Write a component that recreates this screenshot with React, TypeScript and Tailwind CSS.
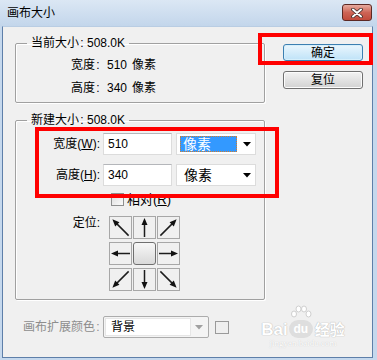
import React from "react";

const F = "font-['Liberation_Sans','Noto_Sans_CJK_SC',sans-serif]";

const ANG: Record<string, number> = { n: -90, s: 90, e: 0, w: 180, ne: -45, nw: -135, se: 45, sw: 135 };

function Arrow({ dir }: { dir: string }) {
  const diag = dir.length === 2;
  const L = diag ? 11.5 : 9.5;
  return (
    <svg width="21" height="21" viewBox="-10.5 -10.5 21 21">
      <g transform={`rotate(${ANG[dir]})`}>
        <line x1={-L} y1={0} x2={L - 5} y2={0} stroke="#1c1c1c" strokeWidth="1.5" />
        <polygon points={`${L},0 ${L - 7},-3 ${L - 7},3`} fill="#111" />
      </g>
    </svg>
  );
}

function Cell({ dir }: { dir?: string }) {
  if (!dir)
    return (
      <div className="w-[23px] h-[23px] rounded-[3px] border border-[#6f6f6f] bg-linear-to-b from-[#f7f7f7] to-[#d9d9d9]" />
    );
  return (
    <div className="w-[23px] h-[23px] border border-[#a7a7a7] bg-[#f0f0f0] flex items-center justify-center">
      <Arrow dir={dir} />
    </div>
  );
}

function Legend({ title }: { title: string }) {
  return (
    <legend className="ml-[11px] px-[4px] leading-[15px] h-[15px]">
      <span className="flex items-center">
        <span>{title}</span>
        <span className="w-[6px] text-center">:</span>
        <span className="ml-[2px]">508.0K</span>
      </span>
    </legend>
  );
}

function DownTri({ color = "#000" }: { color?: string }) {
  return (
    <svg width="8" height="5" viewBox="0 0 8 5">
      <polygon points="0,0 8,0 4,4.5" fill={color} />
    </svg>
  );
}

export default function App() {
  return (
    <div
      className={`relative w-[377px] h-[360px] bg-[#c5d8ed] flex flex-col overflow-hidden ${F} text-[12px] leading-[14px] text-black`}
    >
      {/* Title bar */}
      <div className="h-[26px] shrink-0 flex items-start justify-between pl-[7px] pr-[5px] bg-linear-to-b from-[#dbe7f4] to-[#c3d6eb]">
        <span className="mt-[6px] text-[12px] leading-[14px] text-black">画布大小</span>
        <div className="mt-[4px] w-[30px] h-[17px] rounded-[3px] border border-[#5c2924] bg-linear-to-b from-[#e6ab9f] via-[#cd6456] to-[#c14a3b] flex items-center justify-center">
          <svg width="14" height="10" viewBox="0 0 14 10">
            <path d="M3 1.5 L11 8.5 M11 1.5 L3 8.5" stroke="#3a2a28" strokeWidth="3.6" strokeLinecap="round" />
            <path d="M3 1.5 L11 8.5 M11 1.5 L3 8.5" stroke="#ffffff" strokeWidth="2" strokeLinecap="round" />
          </svg>
        </div>
      </div>

      {/* Client area */}
      <div className="flex-1 ml-[2px] mr-[4px] mb-[2px] bg-[#f0f0f0] border-l border-r border-b border-t border-[#5e7fa9] border-t-[#b9cde3] flex flex-col">
        <div className="flex">
          {/* Left column */}
          <div className="pl-[12px] pt-[9px] flex flex-col">
            <fieldset className="w-[250px] border border-[#a0a0a0] rounded-[2px] shadow-[1px_1px_0_#ffffff,inset_1px_1px_0_#ffffff]">
              <Legend title="当前大小" />
              <div className="pl-[55px] pt-[6px] pb-[6px] flex flex-col gap-[7px]">
                <div className="flex items-center h-[16px]">
                  <span>宽度</span>
                  <span className="w-[6px] text-center">:</span>
                  <span className="ml-[6px]">510</span>
                  <span className="ml-[5px]">像素</span>
                </div>
                <div className="flex items-center h-[16px]">
                  <span>高度</span>
                  <span className="w-[6px] text-center">:</span>
                  <span className="ml-[6px]">340</span>
                  <span className="ml-[5px]">像素</span>
                </div>
              </div>
            </fieldset>

            <fieldset className="mt-[10px] w-[250px] border border-[#a0a0a0] rounded-[2px] shadow-[1px_1px_0_#ffffff,inset_1px_1px_0_#ffffff]">
              <Legend title="新建大小" />
              <div className="pt-[5px] pb-[8px] flex flex-col">
                {/* width row */}
                <div className="flex items-center h-[22px]">
                  <div className="w-[84px] text-right">
                    宽度(<span className="underline">W</span>):
                  </div>
                  <div className="ml-[3px] w-[69px] h-[22px] bg-white border border-[#dcdcdc] border-t-[#b4b6ba] flex items-center pl-[4px] text-[12px]">
                    510
                  </div>
                  <div className="ml-[4px] w-[80px] h-[22px] bg-white border border-[#dcdcdc] flex items-center pl-[3px] pr-[4px] justify-between">
                    <div className="w-[57px] h-[16px] bg-[#3399ff] border border-dotted border-[#d27d2d] text-white text-[14px] leading-[14px] flex items-center pl-[2px]">
                      像素
                    </div>
                    <DownTri />
                  </div>
                </div>
                {/* height row */}
                <div className="mt-[9px] flex items-center h-[22px]">
                  <div className="w-[84px] text-right">
                    高度(<span className="underline">H</span>):
                  </div>
                  <div className="ml-[3px] w-[69px] h-[22px] bg-white border border-[#dcdcdc] border-t-[#b4b6ba] flex items-center pl-[4px] text-[12px]">
                    340
                  </div>
                  <div className="ml-[4px] w-[80px] h-[22px] bg-white border border-[#dcdcdc] flex items-center pl-[7px] pr-[4px] justify-between">
                    <span className="text-[14px] leading-[14px]">像素</span>
                    <DownTri />
                  </div>
                </div>
                {/* checkbox row */}
                <div className="mt-[7px] flex items-center h-[13px] pl-[95px]">
                  <div className="w-[13px] h-[13px] border border-[#8e8f8f] bg-linear-to-br from-[#dcdcdc] to-[#fbfbfb]" />
                  <span className="ml-[3px] text-[13px]">
                    相对(<span className="underline">R</span>)
                  </span>
                </div>
                {/* anchor row */}
                <div className="mt-[10px] flex items-start">
                  <div className="w-[84px] text-right">定位:</div>
                  <div className="ml-[9px] grid grid-cols-[23px_23px_23px] gap-x-[1px] gap-y-[3px]">
                    <Cell dir="nw" />
                    <Cell dir="n" />
                    <Cell dir="ne" />
                    <Cell dir="w" />
                    <Cell />
                    <Cell dir="e" />
                    <Cell dir="sw" />
                    <Cell dir="s" />
                    <Cell dir="se" />
                  </div>
                </div>
              </div>
            </fieldset>
          </div>

          {/* Right column: buttons */}
          <div className="ml-[18px] pt-[17px] flex flex-col">
            <button className="w-[80px] h-[17px] rounded-[3px] border border-[#3c7fb1] bg-linear-to-b from-[#eaf6fd] to-[#bfe3f8] shadow-[inset_0_0_0_1px_#d6effb] text-[12px] leading-[14px] flex items-center justify-center">
              确定
            </button>
            <button className="mt-[10px] w-[80px] h-[18px] rounded-[3px] border border-[#707070] bg-linear-to-b from-[#f3f3f3] to-[#d2d2d2] shadow-[inset_0_0_0_1px_#fcfcfc] text-[12px] leading-[14px] flex items-center justify-center">
              复位
            </button>
          </div>
        </div>

        {/* bottom row */}
        <div className="mt-[16px] pl-[20px] flex items-center">
          <span className="text-[#8d8d8d] flex items-center">
            画布扩展颜色<span className="w-[6px] text-center">:</span>
          </span>
          <div className="ml-[2px] w-[106px] h-[22px] border border-[#acacac] rounded-[2px] bg-[#f4f4f4] flex items-center p-[1px]">
            <div className="w-[86px] h-[18px] border border-[#e6e6e6] bg-white flex items-center pl-[5px]">背景</div>
            <div className="flex-1 flex items-center justify-center">
              <DownTri color="#a0a0a0" />
            </div>
          </div>
          <div className="ml-[6px] w-[14px] h-[13px] border border-[#9a9a9a] bg-[#efefef]" />
        </div>
      </div>

      {/* Red annotation boxes */}
      <div className="absolute left-[258px] top-[33px] w-[115px] h-[32px] border-4 border-[#ff0000]" />
      <div className="absolute left-[35px] top-[127px] w-[244px] h-[71px] border-4 border-[#ff0000]" />

      {/* Baidu watermark */}
      <div className="absolute left-[257px] top-[304px] w-[92px] flex flex-col items-center pointer-events-none">
        <div className="relative flex items-end h-[34px]">
          <span className="text-[17px] leading-[17px] font-bold text-white [text-shadow:0_0_1px_#b8b8b8,0_0_1px_#b8b8b8] font-['Liberation_Sans',sans-serif]">
            Bai
          </span>
          <span className="relative ml-[1px] w-[24px] h-[18px] rounded-[9px] bg-[#dedede] flex items-center justify-center text-[12px] leading-[12px] font-bold text-white">
            du
            <svg className="absolute left-[1px] -top-[15px]" width="22" height="15" viewBox="0 0 22 15">
              <ellipse cx="4" cy="9" rx="2.5" ry="3" fill="#fff" stroke="#cfcfcf" />
              <ellipse cx="8.5" cy="4" rx="2.5" ry="3" fill="#fff" stroke="#cfcfcf" />
              <ellipse cx="14" cy="4" rx="2.5" ry="3" fill="#fff" stroke="#cfcfcf" />
              <ellipse cx="18.5" cy="9" rx="2.5" ry="3" fill="#fff" stroke="#cfcfcf" />
            </svg>
          </span>
          <span className="ml-[2px] text-[15px] leading-[17px] font-bold text-white [text-shadow:0_0_1px_#b8b8b8,0_0_1px_#b8b8b8]">
            经验
          </span>
        </div>
        <span className="mt-[1px] text-[9px] leading-[9px] text-white [text-shadow:0_0_1px_#bdbdbd] font-['Liberation_Serif',serif]">
          jingyan.baidu.com
        </span>
      </div>
    </div>
  );
}
